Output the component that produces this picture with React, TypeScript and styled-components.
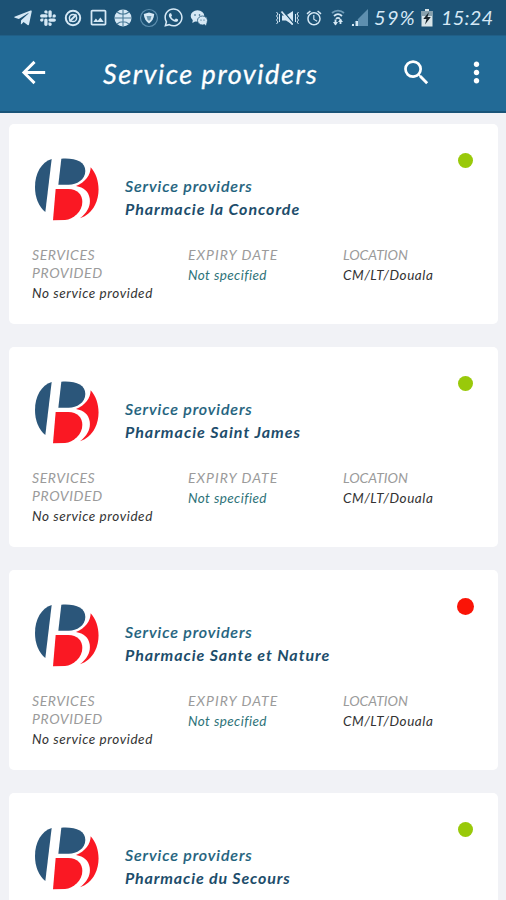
import React from "react";
import styled, { createGlobalStyle } from "styled-components";
import { FaTelegramPlane, FaSlack, FaWhatsapp } from "react-icons/fa";
import { MdArrowBack, MdSearch, MdMoreVert, MdAlarm, MdOutlineImage } from "react-icons/md";

const GlobalStyle = createGlobalStyle`
  * { box-sizing: border-box; }
  body { margin: 0; background: #f1f2f6; overflow: hidden; }
`;

const Screen = styled.div`
  width: 506px;
  height: 900px;
  overflow: hidden;
  background: #f1f2f6;
  font-family: Lato, "Open Sans", sans-serif;
  font-style: italic;
`;

const StatusBar = styled.div`
  height: 35px;
  padding: 0 14px 0 10px;
  display: flex;
  align-items: center;
  justify-content: space-between;
  background: #1c5275;
  color: #d5e8f5;
`;

const Notifications = styled.div`
  display: flex;
`;

const NotificationSlot = styled.span`
  width: 25.2px;
  display: flex;
  justify-content: center;
  align-items: center;
  svg { display: block; }
`;

const SystemTray = styled.div`
  display: flex;
  align-items: center;
  svg { display: block; }
`;

const TrayIcon = styled.span<{ $gap: number }>`
  margin-right: ${(p) => p.$gap}px;
`;

const TrayText = styled.span<{ $width: number; $spacing: number }>`
  width: ${(p) => p.$width}px;
  margin-top: -2px;
  white-space: nowrap;
  font-size: 20px;
  line-height: 24px;
  letter-spacing: ${(p) => p.$spacing}px;
`;

const AppBar = styled.header`
  height: 78px;
  padding: 0 13px 2px 16px;
  display: flex;
  align-items: center;
  background: #226a96;
  border-top: 1px solid #205f87;
  border-bottom: 2px solid #195478;
  color: #fff;
  svg { display: block; }
`;

const PageTitle = styled.h1`
  flex: 1;
  margin: 2px 0 0 52px;
  font-size: 27px;
  line-height: 34px;
  font-weight: 400;
  letter-spacing: 1.55px;
  white-space: nowrap;
  -webkit-text-stroke: 0.3px currentColor;
`;

const Actions = styled.div`
  display: flex;
  gap: 27px;
`;

const CardList = styled.main`
  padding: 11px 8px 0 9px;
  display: flex;
  flex-direction: column;
  gap: 23px;
`;

const Card = styled.article`
  height: 200px;
  padding: 33px 25px 0 23px;
  background: #fff;
  border-radius: 5px;
`;

const CardHeader = styled.div`
  display: flex;
  height: 65px;
  padding-left: 2px;
  svg { display: block; flex: none; }
`;

const Titles = styled.div`
  flex: 1;
  margin: 17px 0 0 26px;
  color: #205f7c;
`;

const Kind = styled.div`
  font-size: 16px;
  line-height: 23px;
  font-weight: 500;
  -webkit-text-stroke: 0.2px currentColor;
  letter-spacing: 0.88px;
`;

const Name = styled.div<{ $spacing: number }>`
  font-size: 16px;
  line-height: 23px;
  font-weight: 700;
  color: #1d4d6b;
  white-space: nowrap;
  letter-spacing: ${(p) => p.$spacing}px;
`;

const StatusDot = styled.span<{ $active: boolean }>`
  width: ${(p) => (p.$active ? 15 : 17)}px;
  height: ${(p) => (p.$active ? 15 : 17)}px;
  margin: ${(p) => (p.$active ? "-4px 0 0 0" : "-5px -1px 0 0")};
  border-radius: 50%;
  background: ${(p) => (p.$active ? "#99c90a" : "#fa1407")};
`;

const Details = styled.dl`
  margin: 24px 0 0;
  display: grid;
  grid-template-columns: 156px 155px 1fr;
`;

const Label = styled.dt<{ $spacing: number }>`
  width: 110px;
  font-size: 14px;
  line-height: 18px;
  color: #9b9b9b;
  white-space: pre-line;
  letter-spacing: ${(p) => p.$spacing}px;
`;

const Value = styled.dd<{ $color: string; $spacing: number }>`
  margin: 1px 0 0;
  font-size: 13.5px;
  line-height: 20px;
  white-space: nowrap;
  color: ${(p) => p.$color};
  letter-spacing: ${(p) => p.$spacing}px;
`;

const BlockedIcon = () => (
  <svg width="18" height="18" viewBox="0 0 18 18" fill="none" stroke="currentColor">
    <circle cx="9" cy="9" r="7.2" strokeWidth="2" />
    <circle cx="9" cy="9" r="3.6" strokeWidth="1.5" />
    <path d="M5.5 12.5 12.5 5.5" strokeWidth="2" />
  </svg>
);

const BallIcon = () => (
  <svg width="18" height="18" viewBox="0 0 18 18">
    <circle cx="9" cy="9" r="8.5" fill="currentColor" />
    <path
      d="M9 .5v17M.5 9h17M3 3c3.5 3 8.500 3 12 0M3 15c3.500-3 8.500-3 12 0"
      fill="none"
      stroke="#4a7b98"
      strokeWidth="1.1"
    />
  </svg>
);

const ShieldIcon = () => (
  <svg width="20" height="20" viewBox="0 0 20 20">
    <circle cx="10" cy="10" r="8.5" fill="none" stroke="#5e8faf" strokeWidth="1.2" />
    <path d="M4.8 6 10 4.6 15.2 6C15 10.5 13 13.5 10 15.5 7 13.5 5 10.5 4.8 6Z" fill="currentColor" />
    <path d="M7.5 8h5l-1 3.500L10 13l-1.500-1.500Z" fill="#6d99b2" />
  </svg>
);

const ChatIcon = () => (
  <svg width="18" height="18" viewBox="0 0 18 18" fill="currentColor">
    <ellipse cx="7.5" cy="7" rx="6.8" ry="5.8" />
    <path d="m3 10-.7 4L6 12Z" />
    <ellipse cx="12.5" cy="11.5" rx="5" ry="4.5" stroke="#1c5275" strokeWidth=".8" />
    <path d="m14 14 2 2.700.5-4Z" />
    <g fill="#1c5275">
      <circle cx="5" cy="6" r=".8" />
      <circle cx="9.5" cy="6" r=".8" />
      <circle cx="11" cy="11" r=".6" />
      <circle cx="14" cy="11" r=".6" />
    </g>
  </svg>
);

const MuteIcon = () => (
  <svg width="25" height="18" viewBox="0 0 25 18" fill="none" stroke="currentColor">
    <path d="M1.5 3 3 5 1.5 7 3 9 1.5 11 3 13 1.5 15M4.5 5v8M23.5 3 22 5l1.5 2L22 9l1.5 2-1.5 2 1.5 2M20.5 5v8" strokeWidth="1" />
    <path d="M7 6.500h4L18 2v14l-7-4.500H7Z" fill="currentColor" stroke="none" />
    <path d="m8 2 11 13" stroke="#1c5275" strokeWidth="1.2" />
    <path d="m6.500 2.500 11 13" strokeWidth="1.8" />
  </svg>
);

const WifiIcon = () => (
  <svg width="14" height="19" viewBox="0 0 14 19" fill="none" stroke="currentColor">
    <path d="M1 5C4.500 1.800 9.500 1.800 13 5" stroke="#6e9bb8" strokeWidth="1.8" />
    <path d="M3 8c2.500-2.300 5.500-2.300 8 0M5 10.800c1.300-1.200 2.700-1.200 4 0" strokeWidth="1.8" />
    <path d="M4.500 11.500v5M9.500 11v5" strokeWidth="1.8" />
    <path d="m2 14 2.500 3.500L7 14ZM7 14l2.500-3 2.500 3Z" fill="currentColor" stroke="none" />
  </svg>
);

const SignalIcon = () => (
  <svg width="17" height="18" viewBox="0 0 17 18">
    <path d="M0 17 17 0v17Z" fill="#5e8faf" />
    <path d="M0 17 7 10v7Z" fill="#1c5275" />
    <path d="M1 17v-2h2v2ZM4.500 17v-5h2.500v5Z" fill="currentColor" />
  </svg>
);

const BatteryIcon = () => (
  <svg width="12" height="18" viewBox="0 0 12 18">
    <path d="M4 0h4v2h3.500v15.500H.5V2H4Z" fill="#d9e5e8" />
    <path d="M.5 2h11v5H.5Z" fill="#88a1ad" />
    <path d="M8 3 2.300 10H5.500L4 15.500 9.800 8H6.500Z" fill="#18242b" />
  </svg>
);

const ProviderLogo = () => (
  <svg width="65" height="65" viewBox="42 36 195 195">
    <g fill="#2b567a">
      <path d="M95 42C64 52 45 85 45 125 45 160 57 185 76 201Z" />
      <path d="M124 41C166 38 196 50 196 78 196 104 170 119 146 119H115Z" />
    </g>
    <g fill="#fa1823">
      <path d="M107 132H145C172 133 187 148 187 171 187 200 160 223 135 225L99 226Z" />
      <path d="M212 67C238 95 243 145 225 180 215 200 200 213 180 220 205 200 212 180 209 160 206 140 192 127 168 123 195 113 212 90 212 67Z" />
    </g>
  </svg>
);

const providers = [
  { name: "Pharmacie la Concorde", active: true, spacing: 0.96, detailed: true },
  { name: "Pharmacie Saint James", active: true, spacing: 1, detailed: true },
  { name: "Pharmacie Sante et Nature", active: false, spacing: 0.93, detailed: true },
  { name: "Pharmacie du Secours", active: true, spacing: 0.86, detailed: false },
];

const fields = [
  { label: "SERVICES\nPROVIDED", value: "No service provided", color: "#333333", labelSpacing: 0.6, valueSpacing: 0.58 },
  { label: "EXPIRY DATE", value: "Not specified", color: "#2e7379", labelSpacing: 1.02, valueSpacing: 0.42 },
  { label: "LOCATION", value: "CM/LT/Douala", color: "#333333", labelSpacing: 0, valueSpacing: 0.55 },
];

const notificationIcons = [
  <FaTelegramPlane size={20} />,
  <FaSlack size={18} />,
  <BlockedIcon />,
  <MdOutlineImage size={21} />,
  <BallIcon />,
  <ShieldIcon />,
  <FaWhatsapp size={21} />,
  <ChatIcon />,
];

export default function App() {
  return (
    <>
      <GlobalStyle />
      <Screen>
        <StatusBar>
          <Notifications>
            {notificationIcons.map((icon, i) => (
              <NotificationSlot key={i}>{icon}</NotificationSlot>
            ))}
          </Notifications>
          <SystemTray>
            <TrayIcon $gap={5}><MuteIcon /></TrayIcon>
            <TrayIcon $gap={8}><MdAlarm size={18} /></TrayIcon>
            <TrayIcon $gap={6}><WifiIcon /></TrayIcon>
            <TrayIcon $gap={6}><SignalIcon /></TrayIcon>
            <TrayText $width={47} $spacing={1.3}>59%</TrayText>
            <TrayIcon $gap={8}><BatteryIcon /></TrayIcon>
            <TrayText $width={51} $spacing={0.2}>15:24</TrayText>
          </SystemTray>
        </StatusBar>
        <AppBar>
          <MdArrowBack size={35} />
          <PageTitle>Service providers</PageTitle>
          <Actions>
            <MdSearch size={33} />
            <MdMoreVert size={33} />
          </Actions>
        </AppBar>
        <CardList>
          {providers.map((p) => (
            <Card key={p.name}>
              <CardHeader>
                <ProviderLogo />
                <Titles>
                  <Kind>Service providers</Kind>
                  <Name $spacing={p.spacing}>{p.name}</Name>
                </Titles>
                <StatusDot $active={p.active} />
              </CardHeader>
              {p.detailed && (
                <Details>
                  {fields.map((f) => (
                    <div key={f.label}>
                      <Label $spacing={f.labelSpacing}>{f.label}</Label>
                      <Value $color={f.color} $spacing={f.valueSpacing}>{f.value}</Value>
                    </div>
                  ))}
                </Details>
              )}
            </Card>
          ))}
        </CardList>
      </Screen>
    </>
  );
}
